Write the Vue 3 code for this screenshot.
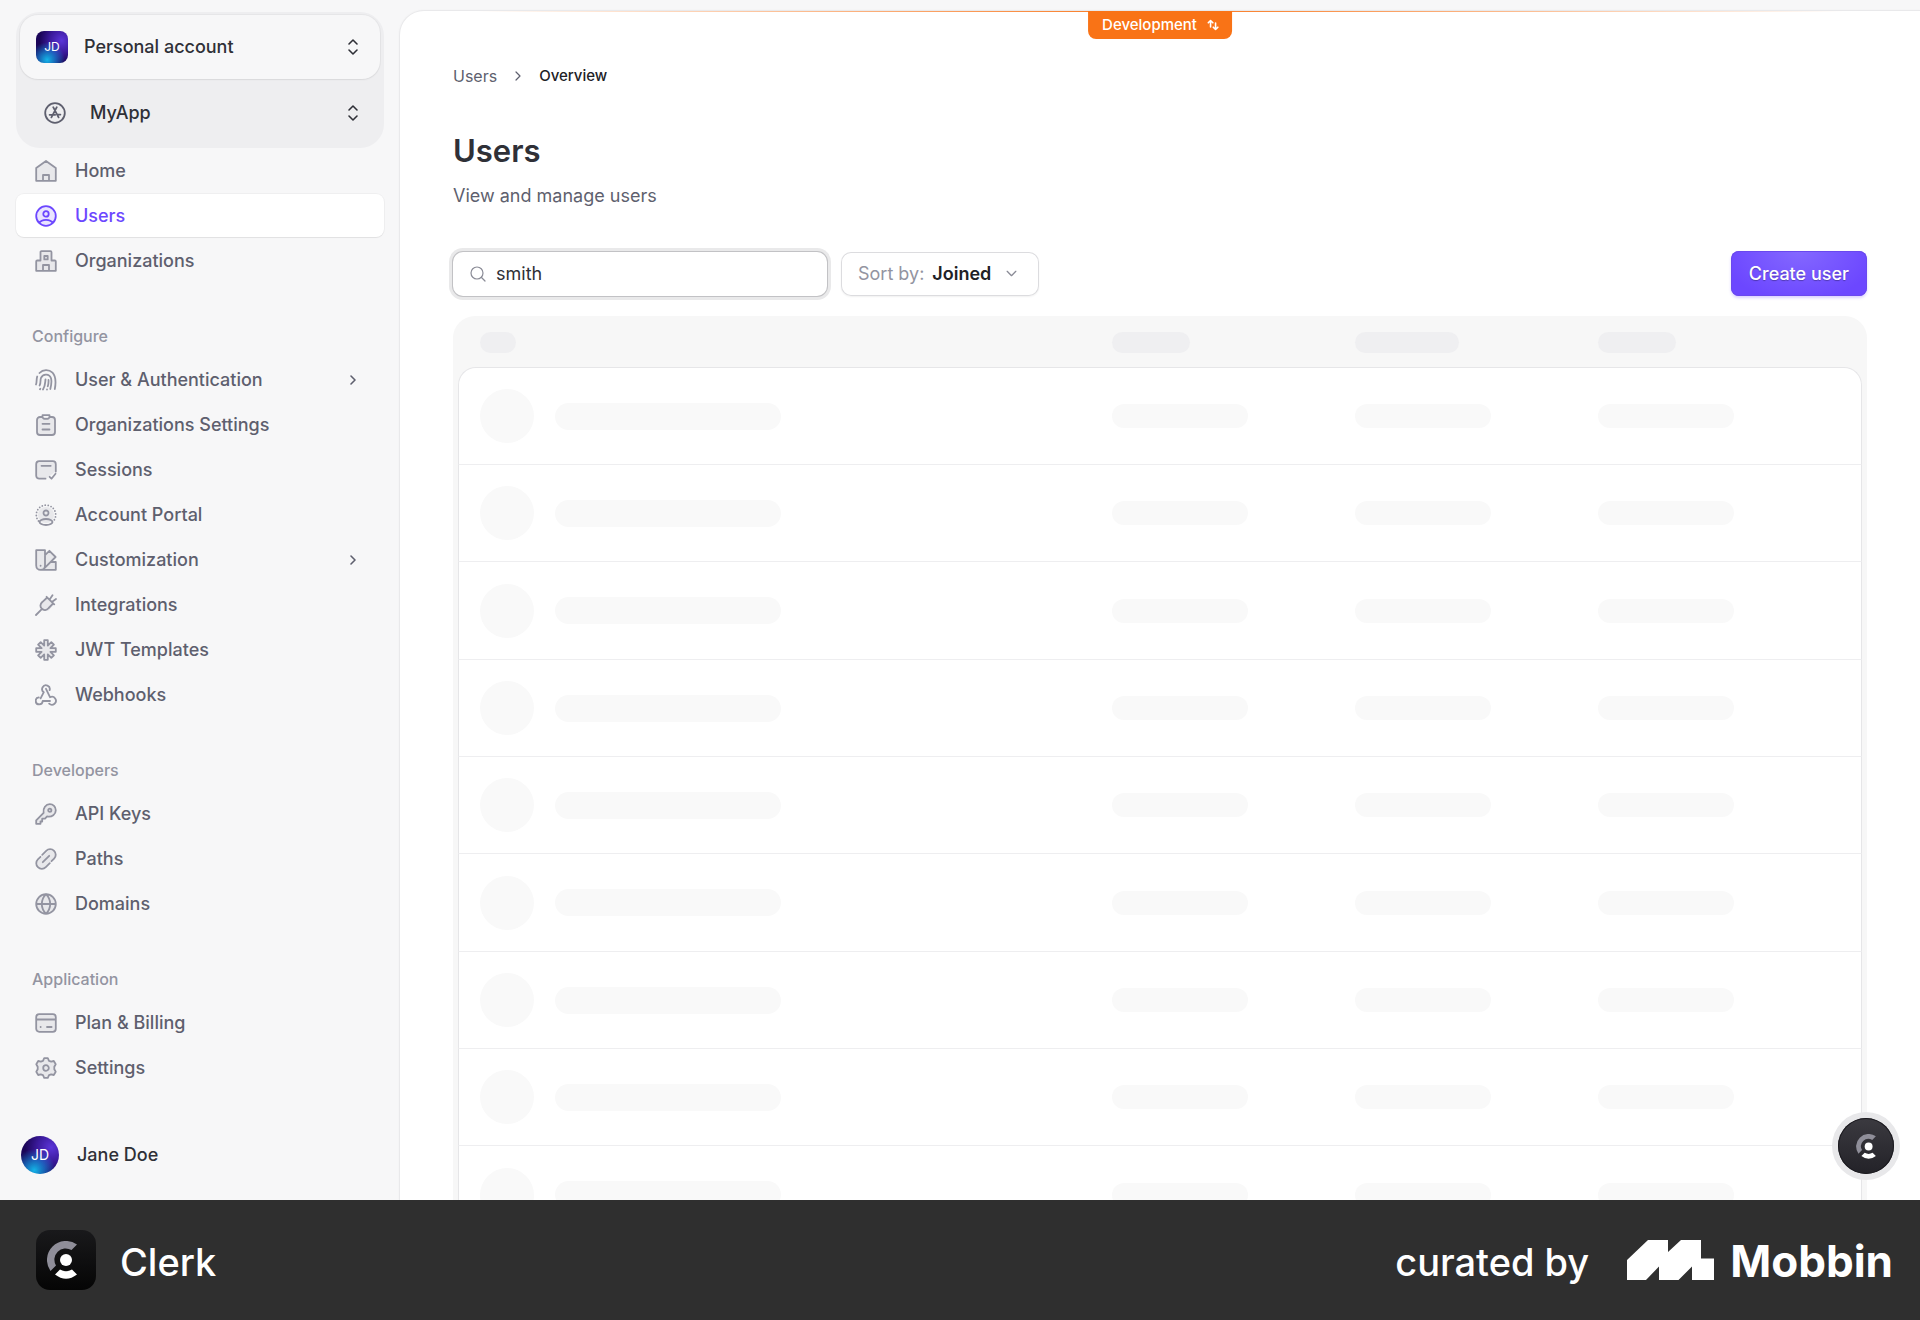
<template>
  <div class="page">
    <div class="app">
      <aside class="sidebar">
        <div class="switcher">
          <button class="account-card" type="button">
            <span class="avatar avatar-square">JD</span>
            <span class="account-name">Personal account</span>
            <svg class="updown" viewBox="0 0 12 18"><path d="M2 6l4-4 4 4M2 12l4 4 4-4" /></svg>
          </button>
          <button class="app-row" type="button">
            <svg class="icon" viewBox="0 0 22 22">
              <circle cx="11" cy="11" r="9.8" />
              <path d="M9.2 5.2l5.400 10.200M12.800 5.200L7.400 15.400M5.600 12.800h5.600M14 12.600h2.400" />
            </svg>
            <span class="app-name">MyApp</span>
            <svg class="updown" viewBox="0 0 12 18"><path d="M2 6l4-4 4 4M2 12l4 4 4-4" /></svg>
          </button>
        </div>
        <nav class="nav">
          <section v-for="group in groups" :key="group.title" class="nav-group">
            <h2 v-if="group.title" class="nav-title">{{ group.title }}</h2>
            <ul class="nav-list">
              <li v-for="item in group.items" :key="item.label">
                <a href="#" class="nav-item" :class="{ active: item.label === current }" @click.prevent="current = item.label">
                  <svg class="icon" viewBox="0 0 22 22">
                    <path v-if="icons[item.icon].tint" class="tint" :d="icons[item.icon].tint" />
                    <path v-if="icons[item.icon].dots" class="dots" :d="icons[item.icon].dots" />
                    <path :d="icons[item.icon].line" />
                  </svg>
                  <span>{{ item.label }}</span>
                  <svg v-if="item.more" class="more" viewBox="0 0 8 12"><path d="M2 2l4 4-4 4" /></svg>
                </a>
              </li>
            </ul>
          </section>
        </nav>
        <button class="profile" type="button">
          <span class="avatar avatar-round">JD</span>
          <span>Jane Doe</span>
        </button>
      </aside>

      <main class="main">
        <div class="env-line"></div>
        <button class="env-badge" type="button">
          Development
          <svg class="env-icon" viewBox="0 0 12 12"><path d="M3.500 8V1.500M1.200 3.800l2.300-2.300 2.300 2.300M8.500 4v6.500M6.200 8.200l2.300 2.300 2.300-2.300" /></svg>
        </button>

        <div class="content">
          <nav class="breadcrumb">
            <a href="#">Users</a>
            <svg class="crumb-arrow" viewBox="0 0 8 12"><path d="M2 2l4 4-4 4" /></svg>
            <span class="crumb-current">Overview</span>
          </nav>
          <h1 class="title">Users</h1>
          <p class="subtitle">View and manage users</p>

          <div class="toolbar">
            <label class="search">
              <svg class="search-icon" viewBox="0 0 16 16"><circle cx="7" cy="7" r="6" /><path d="M11.500 11.500L15 15" /></svg>
              <input v-model="query" type="text" aria-label="Search users">
            </label>
            <label class="sort">
              <span class="sort-label">Sort by:</span>
              <select v-model="sort">
                <option>Joined</option>
              </select>
              <svg class="sort-arrow" viewBox="0 0 12 8"><path d="M2 2l4 4 4-4" /></svg>
            </label>
            <button class="create" type="button">Create user</button>
          </div>

          <div class="table-wrap">
            <table class="table">
              <thead>
                <tr>
                  <th class="col-user"><span class="bar head-user"></span></th>
                  <th class="col-date"><span class="bar head-short"></span></th>
                  <th class="col-date"><span class="bar head-long"></span></th>
                  <th><span class="bar head-short"></span></th>
                </tr>
              </thead>
              <tbody>
                <tr v-for="n in 10" :key="n">
                  <td>
                    <div class="user-cell">
                      <span class="circle"></span>
                      <span class="bar bar-name"></span>
                    </div>
                  </td>
                  <td><span class="bar"></span></td>
                  <td><span class="bar"></span></td>
                  <td><span class="bar"></span></td>
                </tr>
              </tbody>
            </table>
          </div>
        </div>

        <button class="fab" type="button" aria-label="Clerk">
          <svg class="fab-icon" viewBox="0 0 30 38">
            <path class="arc" d="M30 3.500A19 19 0 0 0 3.500 30L9 24.500A11.300 11.300 0 0 1 24.500 9Z" />
            <circle cx="19" cy="19" r="6" />
            <path d="M8 33.500L13 28.500Q19 32 25 28.500L30 33.500Q19 42 8 33.500Z" />
          </svg>
        </button>
      </main>
    </div>

    <footer class="footer">
      <span class="clerk-logo">
        <svg class="clerk-icon" viewBox="0 0 30 38">
          <path class="arc" d="M30 3.500A19 19 0 0 0 3.500 30L9 24.500A11.300 11.300 0 0 1 24.500 9Z" />
          <circle cx="19" cy="19" r="6" />
          <path d="M8 33.500L13 28.500Q19 32 25 28.500L30 33.500Q19 42 8 33.500Z" />
        </svg>
      </span>
      <span class="footer-text">Clerk</span>
      <span class="footer-text curated">curated by</span>
      <svg class="mobbin-icon" viewBox="0 0 87 40">
        <path d="M0 20L21 0H41V12L54 0H74V18.500H87V40H65V26.500L51.500 40H32V26.500L19 40H0Z" />
      </svg>
      <span class="footer-text mobbin">Mobbin</span>
    </footer>
  </div>
</template>

<script setup>
import { ref } from 'vue'

const current = ref('Users')
const query = ref('smith')
const sort = ref('Joined')

const groups = [
  {
    title: '',
    items: [
      { label: 'Home', icon: 'home' },
      { label: 'Users', icon: 'users' },
      { label: 'Organizations', icon: 'building' }
    ]
  },
  {
    title: 'Configure',
    items: [
      { label: 'User & Authentication', icon: 'fingerprint', more: true },
      { label: 'Organizations Settings', icon: 'clipboard' },
      { label: 'Sessions', icon: 'sessions' },
      { label: 'Account Portal', icon: 'portal' },
      { label: 'Customization', icon: 'swatch', more: true },
      { label: 'Integrations', icon: 'plug' },
      { label: 'JWT Templates', icon: 'jwt' },
      { label: 'Webhooks', icon: 'webhook' }
    ]
  },
  {
    title: 'Developers',
    items: [
      { label: 'API Keys', icon: 'key' },
      { label: 'Paths', icon: 'link' },
      { label: 'Domains', icon: 'globe' }
    ]
  },
  {
    title: 'Application',
    items: [
      { label: 'Plan & Billing', icon: 'card' },
      { label: 'Settings', icon: 'cog' }
    ]
  }
]

const ring = 'M11 1.2a9.8 9.8 0 1 1 0 19.6a9.8 9.8 0 1 1 0-19.6z'
const burst = 'M9.2 1.2h3.6v5.4l3.5-3.5 2.6 2.6-3.5 3.5h5.4v3.6h-5.4l3.5 3.5-2.6 2.6-3.5-3.5v5.4H9.2v-5.4l-3.5 3.5-2.6-2.6 3.5-3.5H1.2V9.2h5.4L3.1 5.7l2.6-2.6 3.5 3.5z'

// tint: filled background shape, dots: dotted outline, line: strokes
const icons = {
  home: {
    tint: 'M1.2 8L11 1l9.8 7v12.8H1.2z',
    line: 'M1.2 8L11 1l9.8 7v12.8H1.2zM8 20.800V15h6v5.800'
  },
  users: {
    tint: ring,
    line: ring + 'M11 6.200a2.700 2.700 0 1 1 0 5.400a2.700 2.700 0 1 1 0-5.400zM4.300 18c1.200-2.300 3.700-3.200 6.700-3.200s5.500.9 6.700 3.200'
  },
  building: {
    tint: 'M1.2 10.500h4.300V1.200h11v9.300h4.300v10.300H1.200z',
    line: 'M5.500 10.500H2.200a1 1 0 0 0-1 1v9.300h19.600v-9.300a1 1 0 0 0-1-1h-3.300V2.200a1 1 0 0 0-1-1h-9a1 1 0 0 0-1 1zM9.300 6h3.400v3.400H9.300zM8 20.800V15h6v5.800'
  },
  fingerprint: {
    line: 'M1 15.5C2 13 1.2 10.500 2.200 7.500M4.500 4C8 .3 14 .3 17.500 3.700c4 4.300 3.500 10 2.300 16.300M4.600 16.500C6.200 13 5 11 6 8.800c2-4.600 8.500-4.200 10 .4 1 3.600.3 7-.7 10.800M8 20.500C10.500 16.500 10 14 10.500 10.500M13.500 11c.2 2.500 0 4-.7 6.300M12 20.600v-.1M5 20.300l.3-.6'
  },
  clipboard: {
    tint: 'M2 3h18v18H2z',
    line: 'M7 3H5a3 3 0 0 0-3 3v12a3 3 0 0 0 3 3h12a3 3 0 0 0 3-3V6a3 3 0 0 0-3-3h-2M7.500 1.200h7v1.600a2 2 0 0 1-2 2h-3a2 2 0 0 1-2-2zM7.500 9.800h7M7.500 15.500h7'
  },
  sessions: {
    tint: 'M1.500 2.500h19v10l-9 7h-10z',
    line: 'M10.500 19.700H4.200a3 3 0 0 1-3-3V5.200a3 3 0 0 1 3-3h13.600a3 3 0 0 1 3 3v7.300M6.500 6.800h9.200M14.600 17.800l1.900 1.900 4-5'
  },
  portal: {
    tint: 'M11 3a8 8 0 1 1 0 16a8 8 0 1 1 0-16z',
    dots: 'M3.500 17A9.700 9.700 0 1 1 18.500 17',
    line: 'M11 6.500a2.500 2.500 0 1 1 0 5a2.500 2.500 0 1 1 0-5zM11 15c4 0 6.500 1.700 6.500 3s-2.500 3-6.500 3-6.500-1.700-6.500-3 2.500-3 6.500-3z'
  },
  swatch: {
    tint: 'M1.2 1.2H10V7l5-4.500 5.500 5.500-4 5h4.300v7.800H1.200z',
    line: 'M1.2 1.2H10v15.200a4.400 4.400 0 0 1-8.800 0zM5.600 20.800h15.200V13h-4M10 6.200l4.400-4.400 6.200 6.200L9 19.600M5.600 16.800v-.2'
  },
  plug: {
    tint: 'M12 3.600L6.200 8.500v5.500l2 2.500h5.500l5-5.800z',
    line: 'M1 21l5.800-5.800M11.600 2.800l7.600 7.600M12.200 3.500L7.500 7.800c-2.600 2.200-2.600 5-.7 6.900s4.700 1.900 6.900-.7l4.500-4.600M14.800 5.300L17.500 1.200M17.200 7.800L21 5'
  },
  jwt: {
    tint: burst,
    line: burst
  },
  webhook: {
    line: 'M14.6 6.200A3.800 3.800 0 1 0 8.800 8.200L5.600 14.400M11 4.800l4 8.400a4 4 0 1 1-.8 6.500M15 17h-7.300a3.500 3.500 0 1 1-3.900-3.600'
  },
  key: {
    tint: 'M1.2 20.800v-4l7-7C8 4 11 1.200 14.600 1.200S20.800 4 20.800 7.500 18 13.800 12.500 13.500L10 16H7v3.500z',
    line: 'M1.2 20.800v-3.500L8.600 9.900C7.600 5 11 1.200 14.800 1.200a6 6 0 0 1 6 6c0 4-3.800 7.200-8.700 6.200L10 15.700H7.200v2.800H5.500v2.300zM14.800 5.600a1.600 1.600 0 1 1 0 3.200a1.600 1.600 0 1 1 0-3.200z'
  },
  link: {
    tint: 'M2 14L14 2l6 1 1 5L9 20l-6-.5z',
    line: 'M7.200 6.800l4-4a5.500 5.500 0 0 1 7.900 7.900l-2.600 2.500M14.800 15.200l-4 4a5.500 5.500 0 0 1-7.900-7.900l2.600-2.500M7.800 14.200l6.400-6.400'
  },
  globe: {
    tint: ring,
    line: ring + 'M1.2 11h19.600M11 1.200c-5.600 5.800-5.600 13.800 0 19.600M11 1.200c5.600 5.800 5.600 13.800 0 19.600'
  },
  card: {
    tint: 'M1.2 2.500h19.600v17H1.200z',
    line: 'M4.200 2.200h13.600a3 3 0 0 1 3 3v11.600a3 3 0 0 1-3 3H4.200a3 3 0 0 1-3-3V5.200a3 3 0 0 1 3-3zM1.200 7.500h19.600M5.600 15h.1M12 15h4.600'
  },
  cog: {
    tint: 'M8.500 3.500L11 1l2.500 2.500 5 .5L20 11l-1.500 7-5 .5L11 21l-2.500-2.500-5-.5L2 11l1.500-7z',
    line: 'M9.200 1.200h3.600l1.200 2.600 2.200.8 2.600-.6 1.900 3.200-1.400 2.600v2.400l1.400 2.600-1.900 3.200-2.600-.6-2.200.8-1.200 2.600H9.200L8 18.200l-2.200-.8-2.600.6-1.900-3.200 1.400-2.600V9.800L1.300 7.200 3.200 4l2.600.6L8 3.800zM11 8.200a2.800 2.800 0 1 1 0 5.600a2.800 2.800 0 1 1 0-5.600z'
  }
}
</script>

<style>
body {
  margin: 0;
}
</style>

<style scoped>
.page {
  display: flex;
  flex-direction: column;
  height: 100vh;
  font-family: Inter, "Liberation Sans", sans-serif;
  font-size: 18px;
  line-height: 24px;
  color: #2f3037;
  background: #f7f7f8;
}

.page * {
  box-sizing: border-box;
}

button,
input,
select {
  font: inherit;
  color: inherit;
  border: none;
  background: none;
  padding: 0;
  margin: 0;
}

button {
  cursor: pointer;
}

a {
  color: inherit;
  text-decoration: none;
}

svg {
  flex: none;
  fill: none;
  stroke: currentColor;
  stroke-width: 1.6;
  stroke-linecap: round;
  stroke-linejoin: round;
}

.app {
  display: flex;
  flex: 1;
  min-height: 0;
  overflow: hidden;
}

/* sidebar */
.sidebar {
  display: flex;
  flex-direction: column;
  flex: none;
  width: 400px;
  padding: 12px 16px 26px;
}

.switcher {
  display: flex;
  flex-direction: column;
  height: 136px;
  padding: 3px 4px 0;
  border-radius: 24px;
  background: #eeeef0;
}

.account-card,
.app-row {
  display: flex;
  align-items: center;
  font-weight: 500;
  text-align: left;
}

.account-card {
  height: 64px;
  padding: 0 21px 0 16px;
  gap: 16px;
  border-radius: 18px;
  background: #f7f7f8;
  box-shadow: 0 0 0 1px rgba(0, 0, 0, 0.03), 0 1px 2px rgba(0, 0, 0, 0.06);
}

.app-row {
  flex: 1;
  padding: 0 21px 2px 24px;
  gap: 24px;
}

.app-row .icon {
  color: #5e5f6e;
}

.account-name,
.app-name {
  flex: 1;
}

.updown {
  width: 12px;
  height: 18px;
}

.avatar {
  display: flex;
  align-items: center;
  justify-content: center;
  flex: none;
  font-size: 12px;
  font-weight: 400;
  color: white;
  background:
    radial-gradient(circle at 35% 90%, #14b4e8 0%, rgba(20, 150, 230, 0.6) 25%, transparent 50%),
    radial-gradient(circle at 80% 30%, #5b35d8 0%, rgba(80, 40, 200, 0.6) 35%, transparent 65%),
    #1b0558;
}

.avatar-square {
  width: 32px;
  height: 32px;
  border-radius: 8px;
}

.avatar-round {
  width: 38px;
  height: 38px;
  border-radius: 50%;
  font-size: 14px;
}

.nav-group {
  padding-top: 42px;
}

.nav-group:first-child {
  padding-top: 1px;
}

.nav-title {
  margin: 0 0 10px;
  padding-left: 16px;
  font-size: 16px;
  font-weight: 500;
  line-height: 24px;
  color: #9394a1;
}

.nav-list {
  display: flex;
  flex-direction: column;
  gap: 2px;
  margin: 0;
  padding: 0;
  list-style: none;
}

.nav-item {
  display: flex;
  align-items: center;
  gap: 18px;
  height: 43px;
  padding: 0 27px 0 19px;
  border-radius: 8px;
  font-weight: 500;
  color: #5e5f6e;
}

.nav-item.active {
  color: #6c47ff;
  background: white;
  box-shadow: 0 0 0 1px rgba(0, 0, 0, 0.03), 0 1px 1px rgba(0, 0, 0, 0.06);
}

.icon {
  width: 22px;
  height: 22px;
  stroke-width: 1.8;
}

.nav-item .icon {
  color: #9394a1;
}

.nav-item.active .icon {
  color: #6c47ff;
}

.tint {
  stroke: none;
  fill: currentColor;
  fill-opacity: 0.15;
}

.dots {
  stroke-dasharray: 0 3;
}

.more {
  width: 8px;
  height: 12px;
  margin-left: auto;
}

.profile {
  display: flex;
  align-items: center;
  gap: 18px;
  margin-top: auto;
  padding-left: 5px;
  font-weight: 500;
}

/* main */
.main {
  position: relative;
  flex: 1;
  min-width: 0;
  margin-top: 11px;
  overflow: hidden;
  border-radius: 24px 0 0 0;
  background: white;
  box-shadow: 0 0 0 1px #e9e9eb, 0 0 3px rgba(0, 0, 0, 0.08);
}

.env-line {
  position: absolute;
  top: 0;
  left: 0;
  right: 0;
  height: 1px;
  background: linear-gradient(90deg, transparent 5%, #f97316 50%, transparent 95%);
}

.env-badge {
  position: absolute;
  top: 0;
  left: 50%;
  display: flex;
  align-items: center;
  gap: 10px;
  height: 28px;
  padding: 0 13px 0 14px;
  transform: translateX(-50%);
  border-radius: 0 0 8px 8px;
  font-size: 15px;
  font-weight: 500;
  color: white;
  background: #f97316;
}

.env-icon {
  width: 12px;
  height: 12px;
}

.content {
  padding: 53px 53px 0;
}

.breadcrumb {
  display: flex;
  align-items: center;
  gap: 17px;
  font-size: 16px;
  color: #5e5f6e;
}

.crumb-arrow {
  width: 8px;
  height: 12px;
  stroke-width: 1.2;
}

.crumb-current {
  font-size: 15px;
  font-weight: 500;
  color: #212126;
}

.title {
  margin: 42px 0 0;
  font-size: 31px;
  font-weight: 600;
  line-height: 42px;
}

.subtitle {
  margin: 11px 0 0;
  line-height: 26px;
  color: #5e5f6e;
}

.toolbar {
  display: flex;
  align-items: center;
  gap: 14px;
  margin-top: 42px;
}

.search,
.sort {
  display: flex;
  align-items: center;
  height: 44px;
  padding: 0 17px;
  border-radius: 10px;
  background: white;
}

.search {
  gap: 10px;
  width: 374px;
  box-shadow: 0 0 0 1px #c2c2c5, 0 0 0 4px #e9e9ea;
}

.search input {
  flex: 1;
  min-width: 0;
  outline: none;
}

.search-icon {
  width: 16px;
  height: 16px;
  color: #8a8b96;
  stroke-width: 1.2;
}

.sort {
  padding-right: 21px;
  gap: 8px;
  box-shadow: inset 0 0 0 1px #dcdcdf, 0 1px 2px rgba(0, 0, 0, 0.06);
}

.sort-label {
  color: #9394a1;
}

.sort select {
  appearance: none;
  font-weight: 600;
  color: #212126;
}

.sort-arrow {
  width: 13px;
  height: 9px;
  margin-left: 6px;
  color: #8a8b96;
  stroke-width: 1.2;
}

.create {
  height: 45px;
  margin-left: auto;
  padding: 0 18px;
  border-radius: 8px;
  font-weight: 500;
  color: white;
  text-shadow: 0 1px 1px rgba(0, 0, 0, 0.3);
  background: radial-gradient(ellipse at 50% 0, #8468ff, #6c47ff 80%);
  box-shadow: inset 0 0 0 1px #6a48ee, 0 2px 3px rgba(108, 71, 255, 0.25);
}

.table-wrap {
  margin-top: 20px;
  padding: 0 5px;
  border-radius: 22px 22px 0 0;
  background: #f7f7f7;
}

.table {
  width: 100%;
  table-layout: fixed;
  border-collapse: separate;
  border-spacing: 0;
}

.table th {
  height: 51px;
  padding: 2px 22px 0;
}

.table td {
  height: 97px;
  padding: 0 22px;
  border-bottom: 1px solid #eeeef0;
  background: white;
}

.table tr:nth-child(3n) td {
  height: 98px;
}

.table td:first-child {
  padding-left: 21px;
  border-left: 1px solid #e6e6e8;
}

.table td:last-child {
  border-right: 1px solid #e6e6e8;
}

.table tbody tr:first-child td {
  height: 98px;
  border-top: 1px solid #e6e6e8;
}

.table tbody tr:first-child td:first-child {
  border-top-left-radius: 18px;
}

.table tbody tr:first-child td:last-child {
  border-top-right-radius: 18px;
}

.col-user {
  width: 45%;
}

.col-date {
  width: 17.3%;
}

.bar {
  display: block;
  width: 136px;
  height: 24px;
  border-radius: 12px;
  background: #f9f9f9;
}

.table th .bar {
  height: 21px;
  background: #efeff1;
}

.table th .head-user {
  width: 36px;
}

.table th .head-short {
  width: 78px;
}

.table th .head-long {
  width: 104px;
}

.user-cell {
  display: flex;
  align-items: center;
  gap: 21px;
}

.circle {
  width: 54px;
  height: 54px;
  border-radius: 50%;
  background: #f9f9f9;
}

.bar-name {
  width: 226px;
  height: 27px;
  border-radius: 14px;
}

.fab {
  position: absolute;
  right: 26px;
  bottom: 26px;
  display: flex;
  align-items: center;
  justify-content: center;
  width: 56px;
  height: 56px;
  border-radius: 50%;
  background: linear-gradient(#3b3a40, #232228);
  box-shadow: inset 0 0 0 1px #1c1b20, 0 0 0 6px #e8e8ea;
}

.fab-icon,
.clerk-icon {
  fill: white;
  stroke: none;
}

.fab-icon {
  width: 20px;
  height: 25px;
}

.arc {
  fill: #8f8e99;
}

/* footer */
.footer {
  display: flex;
  align-items: center;
  flex: none;
  height: 120px;
  padding: 0 27px 0 36px;
  color: white;
  background: #2f2f2f;
}

.clerk-logo {
  display: flex;
  align-items: center;
  flex: none;
  width: 60px;
  height: 60px;
  margin-right: 24px;
  padding-left: 11px;
  border-radius: 14px;
  background: linear-gradient(#19191b, #050505);
}

.clerk-icon {
  width: 30px;
  height: 38px;
}

.footer-text {
  padding-top: 4px;
  font-size: 38px;
  font-weight: 500;
  line-height: 48px;
}

.curated {
  margin-left: auto;
}

.mobbin-icon {
  width: 87px;
  height: 40px;
  margin: 0 16px 0 38px;
  fill: white;
  stroke: none;
}

.mobbin {
  padding-top: 2px;
  font-size: 44px;
  font-weight: 700;
}
</style>
